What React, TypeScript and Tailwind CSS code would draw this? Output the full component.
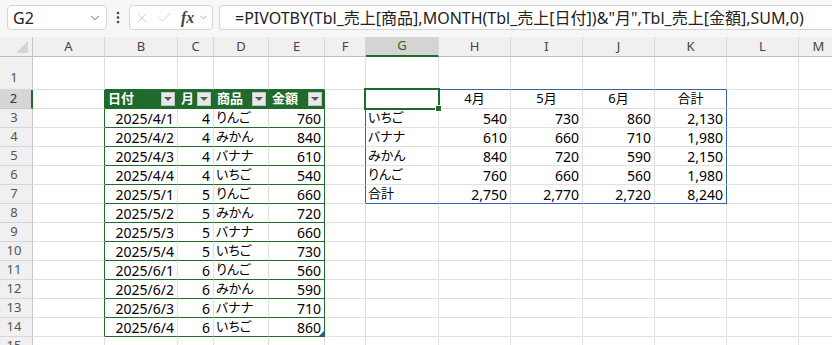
import React from "react";
import { ChevronDown, X, Check } from "lucide-react";

const colW = [
  "w-[33px]",
  "w-[72px]",
  "w-[73px]",
  "w-[36px]",
  "w-[55px]",
  "w-[56px]",
  "w-[41px]",
  "w-[73px]",
  "w-[72px]",
  "w-[72px]",
  "w-[72px]",
  "w-[72px]",
  "w-[72px]",
  "w-[40px]",
];
const letters = ["", "A", "B", "C", "D", "E", "F", "G", "H", "I", "J", "K", "L", "M"];

const sales: [string, number, string, number][] = [
  ["2025/4/1", 4, "りんご", 760],
  ["2025/4/2", 4, "みかん", 840],
  ["2025/4/3", 4, "バナナ", 610],
  ["2025/4/4", 4, "いちご", 540],
  ["2025/5/1", 5, "りんご", 660],
  ["2025/5/2", 5, "みかん", 720],
  ["2025/5/3", 5, "バナナ", 660],
  ["2025/5/4", 5, "いちご", 730],
  ["2025/6/1", 6, "りんご", 560],
  ["2025/6/2", 6, "みかん", 590],
  ["2025/6/3", 6, "バナナ", 710],
  ["2025/6/4", 6, "いちご", 860],
];

const pivot = [
  ["いちご", "540", "730", "860", "2,130"],
  ["バナナ", "610", "660", "710", "1,980"],
  ["みかん", "840", "720", "590", "2,150"],
  ["りんご", "760", "660", "560", "1,980"],
  ["合計", "2,750", "2,770", "2,720", "8,240"],
];

const tableHead = ["日付", "月", "商品", "金額"];
const pivotHead = ["4月", "5月", "6月", "合計"];

// border colours for one cell (right edge, bottom edge)
function rightColor(r: number, c: number) {
  if (r === 2 && c >= 2 && c <= 4) return "border-r-[#1f6b2d]";
  if (r >= 2 && r <= 14 && (c === 1 || c === 5)) return "border-r-[#1f6b2d]";
  if (r >= 2 && r <= 7 && (c === 6 || c === 11)) return "border-r-[#3562b0]";
  return "border-r-[#e0e0e0]";
}

function bottomColor(r: number, c: number) {
  if (r >= 1 && r <= 14 && c >= 2 && c <= 5) return "border-b-[#1f6b2d]";
  if ((r === 1 || r === 7) && c >= 7 && c <= 11) return "border-b-[#3562b0]";
  return "border-b-[#e0e0e0]";
}

function FilterButton() {
  return (
    <div className="w-[14px] h-[14px] bg-[#e8e8e8] border border-[#c4c4c4] flex items-center justify-center shrink-0">
      <div className="w-0 h-0 border-l-[4px] border-r-[4px] border-t-[4px] border-l-transparent border-r-transparent border-t-[#5a5a5a]" />
    </div>
  );
}

function cellContent(r: number, c: number) {
  // table header
  if (r === 2 && c >= 2 && c <= 5) {
    return (
      <div className="h-full bg-[#1f6b2d] flex items-center justify-between pl-[3px] pr-[2px] text-white font-bold text-[13px]">
        <span>{tableHead[c - 2]}</span>
        <FilterButton />
      </div>
    );
  }
  // table body
  if (r >= 3 && r <= 14 && c >= 2 && c <= 5) {
    const row = sales[r - 3];
    if (c === 2) return <div className="h-full flex items-center justify-end pr-[3px]">{row[0]}</div>;
    if (c === 3) return <div className="h-full flex items-center justify-end pr-[3px]">{row[1]}</div>;
    if (c === 4) return <div className="h-full flex items-center pl-[2px] text-[13px]">{row[2]}</div>;
    return (
      <div className="relative h-full flex items-center justify-end pr-[3px]">
        {row[3]}
        {r === 14 && (
          <div className="absolute right-0 bottom-0 w-0 h-0 border-l-[5px] border-b-[5px] border-l-transparent border-b-[#2f5597]" />
        )}
      </div>
    );
  }
  // pivot header + selected G2
  if (r === 2 && c === 7) {
    return (
      <div className="relative h-full">
        <div className="absolute left-[-2px] top-[-2px] w-[76px] h-[22px] border-2 border-[#1f6b2d]">
          <div className="absolute right-[-4px] bottom-[-4px] w-[7px] h-[7px] bg-[#1f6b2d] border border-white" />
        </div>
      </div>
    );
  }
  if (r === 2 && c >= 8 && c <= 11) {
    return <div className="h-full flex items-center justify-center text-[13px]">{pivotHead[c - 8]}</div>;
  }
  if (r >= 3 && r <= 7 && c >= 7 && c <= 11) {
    const row = pivot[r - 3];
    if (c === 7) return <div className="h-full flex items-center pl-[2px] text-[13px]">{row[0]}</div>;
    return <div className="h-full flex items-center justify-end pr-[3px]">{row[c - 7]}</div>;
  }
  return null;
}

function RowHeader({ r }: { r: number }) {
  const active = r === 2;
  return (
    <div
      className={
        "w-[33px] shrink-0 h-full border-b flex justify-center pr-[4px] text-[13px] " +
        (r === 1 ? "items-end pb-[2px] " : "items-center ") +
        (active
          ? "bg-[#d6d6d6] border-r-2 border-r-[#1f6b2d] border-b-[#c8c8c8] text-[#333]"
          : "bg-[#f0f0f0] border-r border-r-[#c8c8c8] border-b-[#d6d6d6] text-[#555]")
      }
    >
      {r}
    </div>
  );
}

function SheetRow({ r }: { r: number }) {
  const h = r === 1 ? "h-[33px]" : "h-[19px]";
  return (
    <div className={"flex " + h}>
      <RowHeader r={r} />
      {letters.slice(1).map((_, i) => {
        const c = i + 1;
        return (
          <div
            key={c}
            className={
              colW[c] + " shrink-0 h-full border-r border-b " + rightColor(r, c) + " " + bottomColor(r, c)
            }
          >
            {cellContent(r, c)}
          </div>
        );
      })}
    </div>
  );
}

function ColumnHeaders() {
  return (
    <div className="flex h-[20px] text-[13px] font-['Noto_Sans',sans-serif]">
      <div className="w-[33px] shrink-0 bg-[#f0f0f0] border-r border-b border-r-[#c8c8c8] border-b-[#bdbdbd] flex items-end justify-end pr-[4px] pb-[3px]">
        <svg width="12" height="12" viewBox="0 0 12 12">
          <polygon points="12,0 12,12 0,12" fill="#d4d4d4" />
        </svg>
      </div>
      {letters.slice(1).map((l, i) => {
        const c = i + 1;
        const active = l === "G";
        return (
          <div
            key={l}
            className={
              colW[c] +
              " shrink-0 flex items-center justify-center border-r border-r-[#d8d8d8] " +
              (active
                ? "bg-[#d4d4d4] border-b-2 border-b-[#1f6b2d] text-[#1f6b2d]"
                : "bg-[#f0f0f0] border-b border-b-[#bdbdbd] text-[#444]")
            }
          >
            {l}
          </div>
        );
      })}
    </div>
  );
}

function FormulaBar() {
  return (
    <div className="h-[37px] bg-[#f7f7f7] flex items-start pt-[5px] pl-[7px] font-['Noto_Sans','Noto_Sans_CJK_JP',sans-serif]">
      <div className="w-[100px] h-[25px] bg-white border border-[#d4d4d4] rounded-[4px] flex items-center justify-between pl-[5px] pr-[4px] text-[16px] text-[#222]">
        <span>G2</span>
        <ChevronDown className="w-[14px] h-[14px] text-[#555]" strokeWidth={1.5} />
      </div>
      <div className="w-[22px] h-[25px] flex items-center justify-center">
        <svg width="4" height="13" viewBox="0 0 4 13">
          <circle cx="2" cy="2" r="1.3" fill="#444" />
          <circle cx="2" cy="6.5" r="1.3" fill="#444" />
          <circle cx="2" cy="11" r="1.3" fill="#444" />
        </svg>
      </div>
      <div className="w-[84px] h-[25px] bg-white border border-[#d4d4d4] rounded-[4px] flex items-center pl-[4px]">
        <X className="w-[16px] h-[16px] text-[#c4c4c4]" strokeWidth={1.2} />
        <Check className="w-[17px] h-[17px] ml-[6px] text-[#c4c4c4]" strokeWidth={1.2} />
        <span className="ml-[8px] font-['Liberation_Serif',serif] italic font-bold text-[16px] text-[#444] leading-none">
          fx
        </span>
        <ChevronDown className="w-[11px] h-[11px] ml-[4px] text-[#888]" strokeWidth={1.5} />
      </div>
      <div className="ml-[6px] flex-1 h-[25px] bg-white border border-r-0 border-[#d4d4d4] rounded-l-[4px] flex items-center pl-[15px] text-[16px] text-[#222] whitespace-nowrap overflow-hidden">
        =PIVOTBY(Tbl_売上[商品],MONTH(Tbl_売上[日付])&amp;"月",Tbl_売上[金額],SUM,0)
      </div>
    </div>
  );
}

export default function App() {
  const rows = Array.from({ length: 15 }, (_, i) => i + 1);
  return (
    <div className="w-[832px] h-[345px] overflow-hidden bg-white">
      <FormulaBar />
      <ColumnHeaders />
      <div className="font-['Noto_Sans','Noto_Sans_CJK_JP',sans-serif] text-[14px] text-black [font-feature-settings:'palt']">
        {rows.map((r) => (
          <SheetRow key={r} r={r} />
        ))}
      </div>
    </div>
  );
}
